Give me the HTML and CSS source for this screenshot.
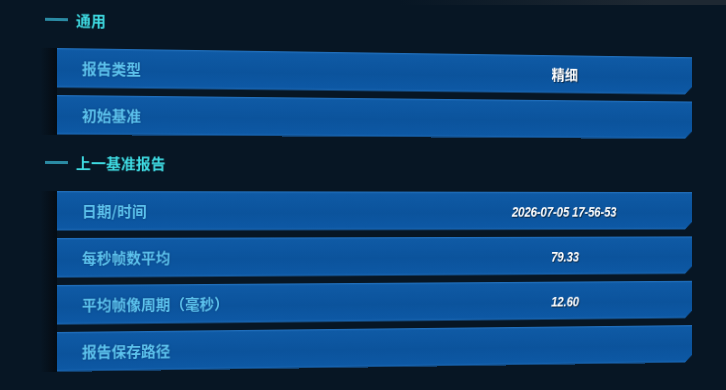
FILE: index.html
```html
<!DOCTYPE html>
<html lang="zh-CN">
<head>
<meta charset="utf-8">
<title>基准报告</title>
<link rel="stylesheet" href="styles.css">
</head>
<body>
<div class="panel">
  <section class="group">
    <h2 class="group-title"><span class="dash"></span>通用</h2>
    <div class="rows">
      <div class="row"><span class="label">报告类型</span><span class="value cn">精细</span></div>
      <div class="row"><span class="label">初始基准</span><span class="value"></span></div>
    </div>
  </section>
  <section class="group">
    <h2 class="group-title"><span class="dash"></span>上一基准报告</h2>
    <div class="rows">
      <div class="row"><span class="label">日期/时间</span><span class="value"><span class="num">2026-07-05 17-56-53</span></span></div>
      <div class="row"><span class="label">每秒帧数平均</span><span class="value"><span class="num">79.33</span></span></div>
      <div class="row"><span class="label">平均帧像周期（毫秒）</span><span class="value"><span class="num">12.60</span></span></div>
      <div class="row"><span class="label">报告保存路径</span><span class="value"></span></div>
    </div>
  </section>
</div>
</body>
</html>
```

FILE: styles.css
```css
html, body {
  margin: 0;
  padding: 0;
}
body {
  width: 726px;
  height: 390px;
  overflow: hidden;
  background:
    linear-gradient(90deg, rgba(30,40,50,0) 55%, #1e2832 90%) top left / 100% 5px no-repeat,
    #071624;
  font-family: "Noto Sans CJK SC", "Noto Sans", sans-serif;
}
.panel {
  padding: 8px 0 0 40px;
  transform-origin: 57px 210px;
  transform: perspective(1000px) rotateY(5.1deg);
}
.group-title {
  margin: 0;
  height: 22px;
  display: flex;
  align-items: center;
  gap: 8px;
  padding-left: 5px;
  font-size: 15px;
  font-weight: 700;
  color: #3edbe2;
  letter-spacing: 0.2px;
}
.dash {
  width: 23px;
  height: 3px;
  background: #2a8aa3;
}
.rows {
  display: flex;
  flex-direction: column;
  gap: 7px;
  padding-left: 17px;
  margin: 17.5px 0 16.5px;
  background: linear-gradient(90deg, rgba(2,7,12,0) 0, rgba(2,7,12,0.75) 17px, rgba(2,7,12,0) 17px);
}
.row {
  width: 676px;
  height: 40px;
  box-sizing: border-box;
  display: flex;
  align-items: center;
  padding: 0 52px 0 25px;
  background: linear-gradient(180deg, #2473c0 0, #0f5aa5 2px, #0b539c 55%, #0d58a4 92%, #1c68b3 100%);
  clip-path: polygon(0 0, 100% 0, 100% calc(100% - 8px), calc(100% - 8px) 100%, 0 100%);
}
.label {
  flex: 1;
  font-size: 15px;
  font-weight: 700;
  color: #5cc3ee;
  text-shadow: 0 0 2px rgba(20,40,80,0.6);
}
.value {
  width: 180px;
  text-align: center;
  color: #ffffff;
  font-size: 15px;
  font-weight: 700;
  text-shadow: 1px 1px 1px rgba(0,0,0,0.6);
}
.value.cn {
  font-size: 14.5px;
}
.num {
  display: inline-block;
  font-family: "Liberation Sans", Arial, sans-serif;
  font-style: italic;
  font-weight: 700;
  font-size: 15px;
  letter-spacing: -0.2px;
  transform: scaleX(0.84);
}
```
